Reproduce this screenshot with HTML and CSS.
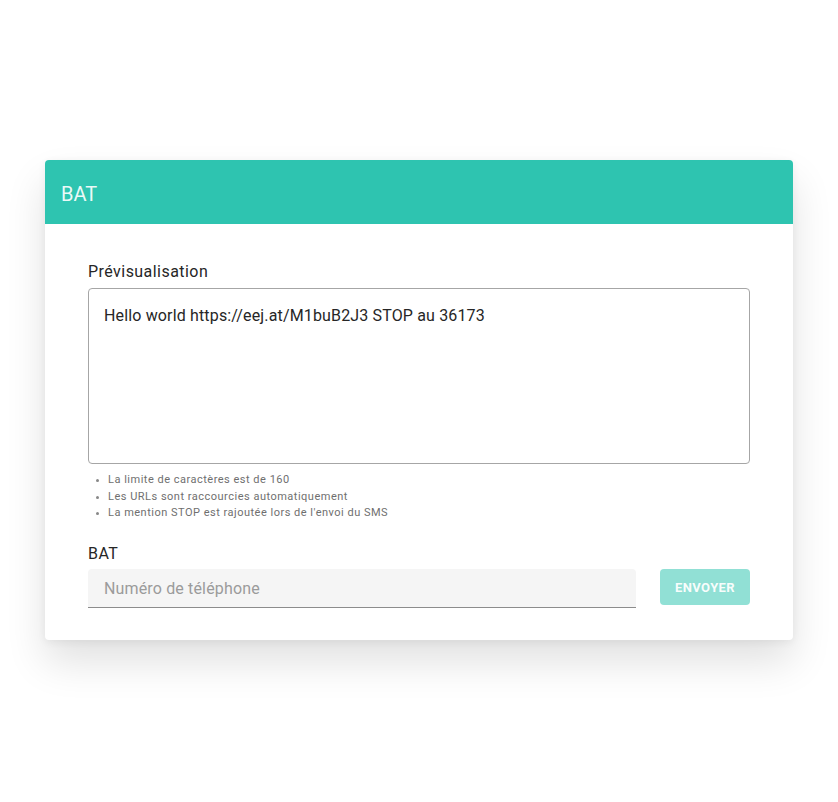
FILE: index.html
```html
<!DOCTYPE html>
<html lang="fr">
<head>
<meta charset="utf-8">
<title>BAT</title>
<link rel="stylesheet" href="styles.css">
</head>
<body>
<div class="card">
  <div class="card-header">BAT</div>
  <div class="card-body">
    <div class="label">Prévisualisation</div>
    <div class="preview">Hello world https://eej.at/M1buB2J3 STOP au 36173</div>
    <ul class="hints">
      <li>La limite de caractères est de 160</li>
      <li>Les URLs sont raccourcies automatiquement</li>
      <li>La mention STOP est rajoutée lors de l'envoi du SMS</li>
    </ul>
    <div class="label label-bat">BAT</div>
    <div class="row">
      <div class="phone">Numéro de téléphone</div>
      <button class="send">Envoyer</button>
    </div>
  </div>
</div>
</body>
</html>
```
FILE: styles.css
```css
* { box-sizing: border-box; }
html, body { margin: 0; padding: 0; background: #fff; }
body {
  font-family: Roboto, "Liberation Sans", Arial, sans-serif;
  color: #212121;
  padding: 160px 45px 0 45px;
  min-height: 802px;
}
.card {
  width: 748px;
  background: #fff;
  border-radius: 4px;
  box-shadow: 0 22px 40px rgba(0,0,0,0.12), 0 2px 8px rgba(0,0,0,0.06);
}
.card-header {
  height: 64px;
  background: #2ec4b0;
  border-radius: 4px 4px 0 0;
  color: rgba(255,255,255,0.92);
  font-size: 20px;
  line-height: 64px;
  padding-top: 2px;
  padding-left: 16px;
}
.card-body {
  padding: 36px 43px 32px 43px;
}
.label {
  font-size: 16px;
  line-height: 24px;
  letter-spacing: 0.45px;
  color: #262626;
  margin-bottom: 4px;
}
.preview {
  height: 176px;
  border: 1px solid #a6a6a6;
  border-radius: 4px;
  padding: 15px 15px 14px 15px;
  font-size: 16px;
  line-height: 24px;
  letter-spacing: 0.15px;
  color: #262626;
}
.hints {
  margin: 8px 0 0 0;
  padding-left: 20px;
  font-size: 11px;
  line-height: 16.7px;
  letter-spacing: 0.5px;
  color: #6f6f6f;
}
.hints li::marker { font-size: 9px; color: #888; }
.label-bat { margin-top: 20px; margin-bottom: 3px; }
.row {
  display: flex;
  align-items: flex-start;
  gap: 24px;
}
.phone {
  flex: 0 0 548px;
  height: 39px;
  background: #f5f5f5;
  border-bottom: 1px solid #8c8c8c;
  border-radius: 4px 4px 0 0;
  padding-left: 16px;
  font-size: 16px;
  line-height: 39px;
  color: #9b9b9b;
  letter-spacing: 0.15px;
}
.send {
  width: 90px;
  height: 36px;
  border: none;
  border-radius: 4px;
  background: #91e0d5;
  color: rgba(255,255,255,0.95);
  font-family: Roboto, "Liberation Sans", Arial, sans-serif;
  font-size: 13px;
  font-weight: 700;
  text-transform: uppercase;
  letter-spacing: 0.4px;
  padding: 0;
}
```
